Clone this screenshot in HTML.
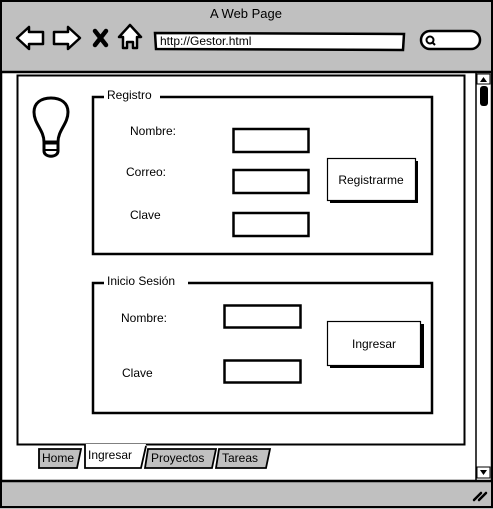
<!DOCTYPE html>
<html><head><meta charset="utf-8"><style>
html,body{margin:0;padding:0;width:493px;height:509px;overflow:hidden;background:#fff}
svg{display:block}
text{font-family:"Liberation Sans",sans-serif;fill:#000}
</style></head><body>
<svg width="493" height="509" viewBox="0 0 493 509" xmlns="http://www.w3.org/2000/svg">
<rect x="1" y="1" width="491" height="506" fill="#fff" stroke="#000" stroke-width="2.5"/>
<rect x="2" y="2" width="489" height="69" fill="#c0c0c0"/>
<line x1="1" y1="72" x2="492" y2="72" stroke="#000" stroke-width="2.5"/>
<rect x="2" y="482" width="489" height="24" fill="#c0c0c0"/>
<line x1="1" y1="481" x2="492" y2="481" stroke="#000" stroke-width="2.5"/>
<text x="246" y="18" font-size="13" text-anchor="middle">A Web Page</text>
<path d="M17 38 L29 27 L29 32 L43 32 L43 44 L29 44 L29 49 Z" fill="#fff" stroke="#000" stroke-width="2.5" stroke-linejoin="round"/>
<path d="M80 38 L68 27 L68 32 L54 32 L54 44 L68 44 L68 49 Z" fill="#fff" stroke="#000" stroke-width="2.5" stroke-linejoin="round"/>
<path d="M95 31 L106 45 M106 31 L95 45" stroke="#000" stroke-width="4.5" stroke-linecap="round"/>
<path d="M130 25 L141 37 L137 37 L137 48 L133 48 L133 42 L127 42 L127 48 L123 48 L123 37 L119 37 Z" fill="#fff" stroke="#000" stroke-width="2.5" stroke-linejoin="round"/>
<path d="M155 33 L404 34 L403 50 L156 49 Z" fill="#fff" stroke="#000" stroke-width="2.5"/>
<text x="160" y="45" font-size="12">http://Gestor.html</text>
<rect x="421" y="31" width="59" height="18" rx="9" fill="#fff" stroke="#000" stroke-width="2.5"/>
<circle cx="430" cy="40" r="3.5" fill="none" stroke="#000" stroke-width="2"/>
<line x1="432" y1="42" x2="435" y2="45" stroke="#000" stroke-width="2"/>
<rect x="17.5" y="75.5" width="447" height="369" fill="#fff" stroke="#000" stroke-width="2"/>
<line x1="476" y1="72" x2="476" y2="481" stroke="#000" stroke-width="1.5"/>
<rect x="477" y="74" width="13" height="10" fill="#fff" stroke="#000" stroke-width="1"/>
<path d="M480 82 L483.5 77 L487 82 Z" fill="#000"/>
<rect x="480" y="86" width="8" height="20" rx="3" fill="#000"/>
<rect x="477" y="467" width="13" height="11" fill="#fff" stroke="#000" stroke-width="1"/>
<path d="M480 470 L487 470 L483.5 475 Z" fill="#000"/>
<path d="M474 500 L481 493 M479 500 L486 493" stroke="#000" stroke-width="2.5" stroke-linecap="round"/>
<path d="M44 142 C44 130 34 124 34 112 C34 103 41 98 51 98 C61 98 68 103 68 112 C68 124 58 130 58 142 Z" fill="#fff" stroke="#000" stroke-width="3" stroke-linejoin="round"/>
<path d="M44 143 L58 143 L58 151 C58 158 44 158 44 151 Z" fill="#fff" stroke="#000" stroke-width="3"/>
<line x1="44" y1="150" x2="58" y2="150" stroke="#000" stroke-width="2"/>
<path d="M104 97 L93 97 L93 254 L432 254 L432 97 L160 97" fill="none" stroke="#000" stroke-width="2.5"/>
<text x="107" y="99" font-size="12">Registro</text>
<text x="130" y="135" font-size="12">Nombre:</text>
<text x="126" y="176" font-size="12">Correo:</text>
<text x="130" y="219" font-size="12">Clave</text>
<rect x="233.5" y="129" width="75" height="23" fill="#fff" stroke="#000" stroke-width="2.5"/>
<rect x="233.5" y="170" width="75" height="23" fill="#fff" stroke="#000" stroke-width="2.5"/>
<rect x="233.5" y="213" width="75" height="23" fill="#fff" stroke="#000" stroke-width="2.5"/>
<rect x="330" y="161" width="88" height="42" fill="#000"/>
<rect x="327.5" y="158.5" width="88" height="42" fill="#fff" stroke="#000" stroke-width="1.2"/>
<text x="371" y="184" font-size="12" text-anchor="middle">Registrarme</text>
<path d="M104 283 L93 283 L93 413 L432 413 L432 283 L188 283" fill="none" stroke="#000" stroke-width="2.5"/>
<text x="107" y="285" font-size="12">Inicio Sesión</text>
<text x="121" y="322" font-size="12">Nombre:</text>
<text x="122" y="377" font-size="12">Clave</text>
<rect x="224.5" y="305.5" width="76" height="22" fill="#fff" stroke="#000" stroke-width="2.5"/>
<rect x="224.5" y="360.5" width="76" height="22" fill="#fff" stroke="#000" stroke-width="2.5"/>
<rect x="330" y="324" width="94" height="44" fill="#000"/>
<rect x="327.5" y="321.5" width="93" height="44" fill="#fff" stroke="#000" stroke-width="1.2"/>
<text x="374" y="348" font-size="12" text-anchor="middle">Ingresar</text>
<path d="M39 449 L81 449 L77 468 L39 468 Z" fill="#c0c0c0" stroke="#000" stroke-width="1.8"/>
<text x="42" y="462" font-size="12">Home</text>
<path d="M148 449 L216 449 L212 468 L145 468 Z" fill="#c0c0c0" stroke="#000" stroke-width="1.8"/>
<text x="151" y="462" font-size="12">Proyectos</text>
<path d="M219 449 L270 449 L266 468 L216 468 Z" fill="#c0c0c0" stroke="#000" stroke-width="1.8"/>
<text x="222" y="462" font-size="12">Tareas</text>
<path d="M85 468 L85 444 L146 444 L141 468 Z" fill="#fff" stroke="none"/>
<path d="M85 444 L85 468 L141 468 L146 446" fill="none" stroke="#000" stroke-width="1.8"/>
<text x="88" y="459" font-size="12">Ingresar</text>
</svg>
</body></html>
